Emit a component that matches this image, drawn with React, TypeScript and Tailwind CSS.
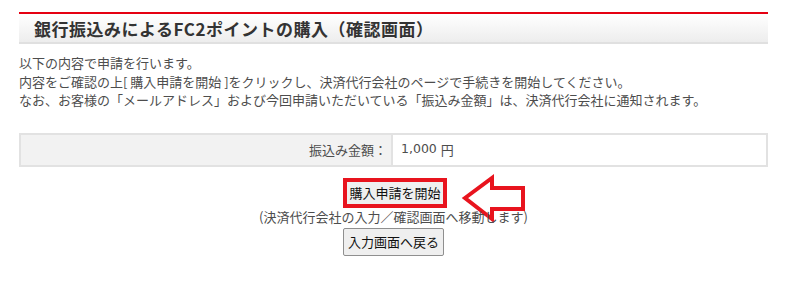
import React from 'react'

const font = "font-['Noto_Sans_CJK_JP','Noto_Sans',sans-serif]"

function App() {
  return (
    <div className={`${font} w-[800px] h-[287px] bg-white text-[#4d4d4d] overflow-hidden`}>
      <div className="ml-[19px] w-[749px] pt-[12px]">
        {/* title bar */}
        <div className="border-t-2 border-[#e50012] border-b-2 border-b-[#e0e0e0] bg-gradient-to-b from-white to-[#ededed] h-[32px] flex items-center pl-[15px]">
          <h2 className="text-[17px] font-bold text-[#333] leading-none tracking-[0.5px]">
            銀行振込みによるFC2ポイントの購入（確認画面）
          </h2>
        </div>

        <div className="mt-[10px] text-[13px] leading-[18.5px]">
          <p>以下の内容で申請を行います。</p>
          <p>内容をご確認の上[ 購入申請を開始 ]をクリックし、決済代行会社のページで手続きを開始してください。</p>
          <p>なお、お客様の「メールアドレス」および今回申請いただいている「振込み金額」は、決済代行会社に通知されます。</p>
        </div>

        {/* amount table */}
        <div className="mt-[23px] flex h-[34px] border-2 border-[#e2e2e2] text-[13px]">
          <div className="w-[372px] bg-[#f2f2f2] border-r-2 border-[#e2e2e2] flex items-center justify-end pr-[4px]">
            振込み金額：
          </div>
          <div className="flex-1 flex items-center pl-[8px]">
            <span className="font-['DejaVu_Sans',sans-serif] text-[12.5px]">1,000</span>
            <span className="ml-[4px]">円</span>
          </div>
        </div>

        <div className="flex flex-col items-center mt-[11px] pl-[3px]">
          <div className="relative border-4 border-[#e8141e] w-[104px] h-[30px] flex">
            <button className="flex-1 bg-[#efefef] text-[13px] text-[#111] leading-none">
              購入申請を開始
            </button>
            <svg
              className="absolute left-full top-[-8px]"
              width="86"
              height="52"
              viewBox="0 0 86 52"
            >
              <polygon
                points="22,24 49,4 49,14 80,14 80,35 49,35 49,45"
                fill="white"
                stroke="#e8141e"
                strokeWidth="4"
              />
            </svg>
          </div>
          <p className="text-[13px] leading-[17px] -ml-[3px] relative">
            (決済代行会社の入力／確認画面へ移動します)
          </p>
          <button className="mt-[3px] w-[101px] h-[28px] bg-[#efefef] border border-[#8f8f8f] rounded-[2px] text-[13px] text-[#111] leading-none -ml-[3px]">
            入力画面へ戻る
          </button>
        </div>
      </div>
    </div>
  )
}

export default App
